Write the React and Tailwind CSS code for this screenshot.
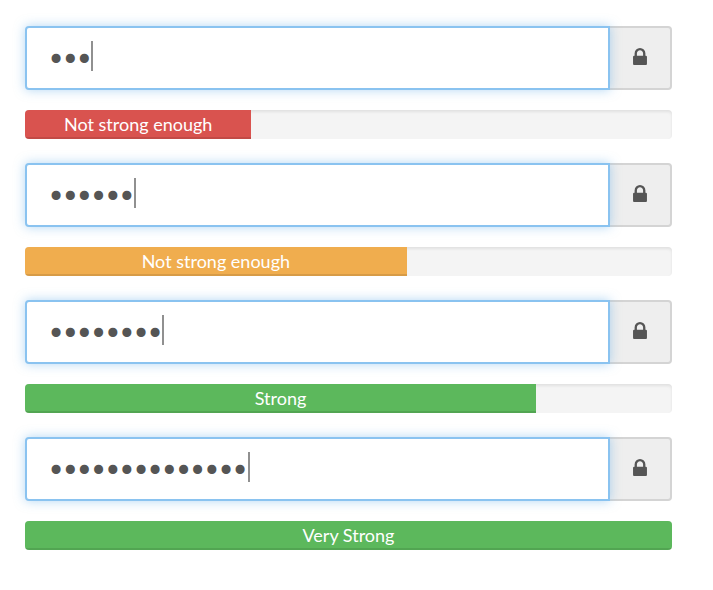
import React, { useState } from "react";
import clsx from "clsx";

const DOT_WIDTH = 14.25;

const FIELDS = [
  { id: "pw-weak", value: "abc", percent: 35, label: "Not strong enough", color: "bg-[#d9534f]" },
  { id: "pw-fair", value: "abcdef", percent: 59, label: "Not strong enough", color: "bg-[#f0ad4e]" },
  { id: "pw-strong", value: "abcdefgh", percent: 79, label: "Strong", color: "bg-[#5cb85c]" },
  { id: "pw-best", value: "abcdefghijklmn", percent: 100, label: "Very Strong", color: "bg-[#5cb85c]" },
];

function LockIcon() {
  return (
    <svg
      viewBox="0 0 1152 1408"
      className="h-[17px] w-[14px] fill-[#555555]"
      aria-hidden="true"
    >
      <g transform="translate(0 1408) scale(1 -1)">
        <path d="M320 768h512v192q0 106-75 181t-181 75-181-75-75-181v-192zM1152 672v-576q0-40-28-68t-68-28h-960q-40 0-68 28t-28 68v576q0 40 28 68t68 28h32v192q0 184 132 316t316 132 316-132 132-316v-192h32q40 0 68-28t28-68z" />
      </g>
    </svg>
  );
}

function PasswordField({ id, value: initial }) {
  const [value, setValue] = useState(initial);

  return (
    <div className="flex h-16">
      <div className="relative z-10 min-w-0 flex-1">
        <input
          id={id}
          type="password"
          aria-label="Password"
          value={value}
          onChange={(e) => setValue(e.target.value)}
          className="h-full w-full rounded-l-[4px] border-2 border-[#8ac3f0] bg-white px-[22px] pt-1 font-['DejaVu_Sans',sans-serif] text-[24px] text-[#555555] caret-transparent shadow-[0_0_11px_rgba(102,175,233,0.5)] outline-none [-webkit-text-stroke:2px_#555555]"
        />
        {/* caret, always visible at the end of the dots */}
        <span
          className="pointer-events-none absolute top-[15px] h-[30px] w-[2px] bg-[#909090]"
          style={{ left: Math.round(23 + value.length * DOT_WIDTH) }}
        />
      </div>
      <label
        htmlFor={id}
        className="flex w-[62px] items-center justify-center rounded-r-[4px] border-2 border-l-0 border-[#d4d4d4] bg-[#eeeeee] pb-[3px]"
      >
        <LockIcon />
      </label>
    </div>
  );
}

function StrengthBar({ percent, label, color }) {
  return (
    <div
      role="progressbar"
      aria-valuenow={percent}
      aria-valuemin={0}
      aria-valuemax={100}
      className="h-[29px] overflow-hidden rounded-[4px] bg-[#f4f4f4] shadow-[inset_0_2px_3px_rgba(0,0,0,0.08)]"
    >
      <div
        className={clsx(
          "h-full text-center text-[18px] leading-7 text-white shadow-[inset_0_-2px_0_rgba(0,0,0,0.1)]",
          color
        )}
        style={{ width: `${percent}%` }}
      >
        {label}
      </div>
    </div>
  );
}

export default function App() {
  return (
    <main className="flex min-h-screen flex-col gap-6 bg-white pt-[26px] pr-[41px] pb-6 pl-[25px] font-['Lato',sans-serif]">
      {FIELDS.map((field) => (
        <section key={field.id} className="flex flex-col gap-5">
          <PasswordField id={field.id} value={field.value} />
          <StrengthBar
            percent={field.percent}
            label={field.label}
            color={field.color}
          />
        </section>
      ))}
    </main>
  );
}
